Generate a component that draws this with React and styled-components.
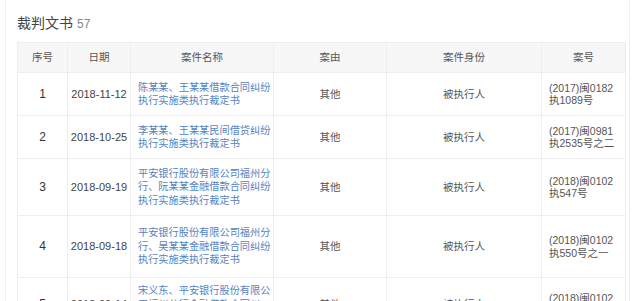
import React from "react";
import styled, { createGlobalStyle } from "styled-components";

const Global = createGlobalStyle`
  html, body {
    margin: 0;
    padding: 0;
    background: #fff;
    font-family: "Liberation Sans", "Noto Sans CJK SC", sans-serif;
    overflow: hidden;
  }
`;

const Page = styled.div`
  margin-left: 5px;
  width: 625px;
  height: 301px;
  border-left: 1px solid #eeeeee;
  border-right: 1px solid #eeeeee;
  padding: 0 6px 0 11px;
  box-sizing: border-box;
`;

const Title = styled.div`
  display: flex;
  align-items: baseline;
  gap: 4px;
  height: 42px;
  padding-top: 12px;
  box-sizing: border-box;
  font-size: 14px;
  color: #444;
`;

const Count = styled.span`
  font-size: 12px;
  color: #888;
`;

const Table = styled.table`
  width: 608px;
  border-collapse: collapse;
  table-layout: fixed;
  font-size: 11px;
  line-height: 12.5px;
`;

const HeadRow = styled.tr`
  height: 30px;
  background: #f7f7f7;
`;

const Th = styled.th`
  font-weight: normal;
  color: #555;
  font-size: 10.5px;
  text-align: center;
  border: 1px solid #eeeeee;
  padding: 0;
`;

const Row = styled.tr`
  height: ${(p) => p.$h}px;
`;

const Td = styled.td`
  border: 1px solid #eeeeee;
  padding: ${(p) => (p.$align === "left" ? "0 3px 0 7px" : "0")};
  text-align: ${(p) => p.$align || "center"};
  vertical-align: middle;
  color: ${(p) => p.$color || "#555"};
  font-size: ${(p) => p.$size || 11}px;
  white-space: nowrap;
  overflow: hidden;
`;

const Line = styled.div`
  display: block;
`;

const Link = styled.a`
  color: #5583c0;
  text-decoration: none;
  font-size: 10.2px;
`;

const rows = [
  {
    no: 1,
    date: "2018-11-12",
    name: ["陈某某、王某某借款合同纠纷", "执行实施类执行裁定书"],
    cause: "其他",
    role: "被执行人",
    code: ["(2017)闽0182", "执1089号"],
    h: 43,
  },
  {
    no: 2,
    date: "2018-10-25",
    name: ["李某某、王某某民间借贷纠纷", "执行实施类执行裁定书"],
    cause: "其他",
    role: "被执行人",
    code: ["(2017)闽0981", "执2535号之二"],
    h: 43,
  },
  {
    no: 3,
    date: "2018-09-19",
    name: ["平安银行股份有限公司福州分", "行、阮某某金融借款合同纠纷", "执行实施类执行裁定书"],
    cause: "其他",
    role: "被执行人",
    code: ["(2018)闽0102", "执547号"],
    h: 57,
  },
  {
    no: 4,
    date: "2018-09-18",
    name: ["平安银行股份有限公司福州分", "行、吴某某金融借款合同纠纷", "执行实施类执行裁定书"],
    cause: "其他",
    role: "被执行人",
    code: ["(2018)闽0102", "执550号之一"],
    h: 62,
  },
  {
    no: 5,
    date: "2018-09-14",
    name: ["宋义东、平安银行股份有限公", "司福州分行金融借款合同纠", "纷执行实施类执行裁定书"],
    cause: "其他",
    role: "被执行人",
    code: ["(2018)闽0102", "执548号"],
    h: 54,
  },
];

export default function App() {
  return (
    <>
      <Global />
      <Page>
        <Title>
          裁判文书<Count>57</Count>
        </Title>
        <Table>
          <colgroup>
            <col style={{ width: 50 }} />
            <col style={{ width: 63 }} />
            <col style={{ width: 143 }} />
            <col style={{ width: 113 }} />
            <col style={{ width: 155 }} />
            <col style={{ width: 84 }} />
          </colgroup>
          <thead>
            <HeadRow>
              <Th>序号</Th>
              <Th>日期</Th>
              <Th>案件名称</Th>
              <Th>案由</Th>
              <Th>案件身份</Th>
              <Th>案号</Th>
            </HeadRow>
          </thead>
          <tbody>
            {rows.map((r) => (
              <Row key={r.no} $h={r.h}>
                <Td $color="#333" $size={12}>{r.no}</Td>
                <Td $color="#444">{r.date}</Td>
                <Td $align="left">
                  {r.name.map((l, i) => (
                    <Line key={i}>
                      <Link href="#">{l}</Link>
                    </Line>
                  ))}
                </Td>
                <Td $size={10.5}>{r.cause}</Td>
                <Td $size={10.5}>{r.role}</Td>
                <Td $align="left" $size={10.5}>
                  {r.code.map((l, i) => (
                    <Line key={i}>{l}</Line>
                  ))}
                </Td>
              </Row>
            ))}
          </tbody>
        </Table>
      </Page>
    </>
  );
}
